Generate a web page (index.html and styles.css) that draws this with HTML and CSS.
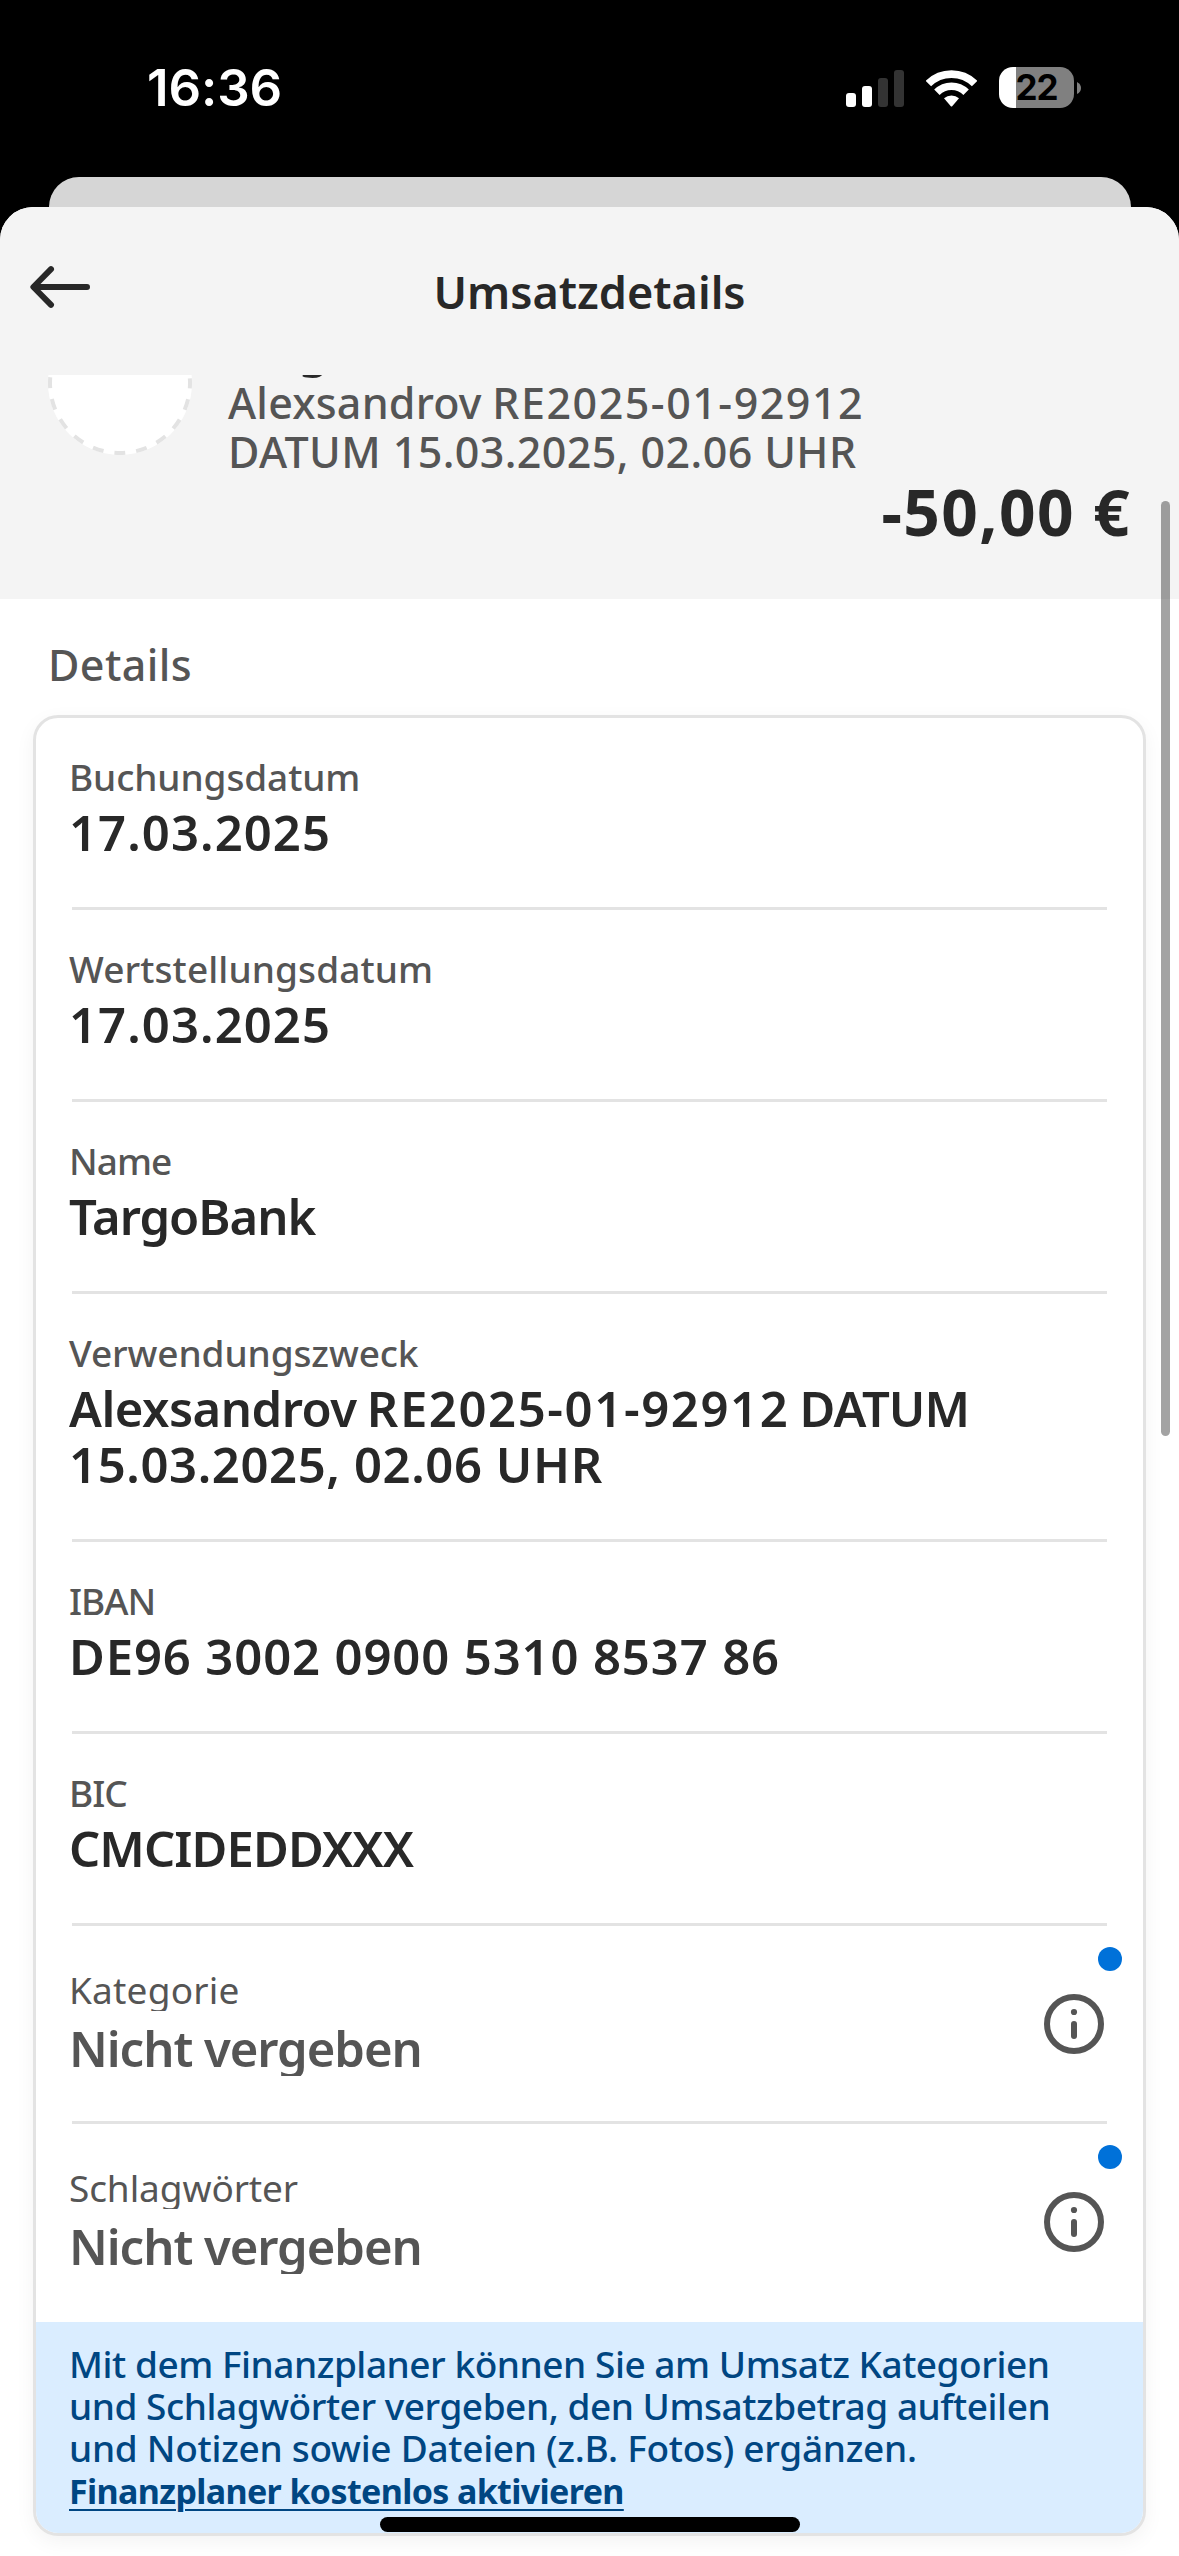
FILE: index.html
```html
<!DOCTYPE html>
<html lang="de">
<head>
  <meta charset="utf-8">
  <title>Umsatzdetails</title>
  <link rel="stylesheet" href="styles.css">
</head>
<body>
  <div class="screen">
    <header class="status">
      <div class="clock">16:36</div>
      <div class="status-icons">
        <svg class="signal" width="58" height="38" viewBox="0 0 58 38">
          <rect x="0" y="24" width="10" height="14" rx="3" fill="#fff"/>
          <rect x="16" y="17" width="10" height="21" rx="3" fill="#fff"/>
          <rect x="32" y="9" width="10" height="29" rx="3" fill="#333"/>
          <rect x="48" y="1" width="10" height="37" rx="3" fill="#333"/>
        </svg>
        <svg class="wifi" width="51" height="38" viewBox="0 0 51 38">
          <g fill="none" stroke="#fff" stroke-width="7.7">
            <path d="M2.4 14.6A33 33 0 0 1 48.6 14.6"/>
            <path d="M10.9 23.3A20.7 20.7 0 0 1 40.1 23.3"/>
          </g>
          <path d="M18 29.2A11.5 11.5 0 0 1 33 29.2L26.2 37.2Q25.5 38 24.8 37.2Z" fill="#fff"/>
        </svg>
        <div class="battery"><span class="battery-level">22</span></div>
        <svg class="battery-nub" width="4" height="12" viewBox="0 0 4 12"><path d="M0 0Q4 2 4 6Q4 10 0 12Z" fill="#808080"/></svg>
      </div>
    </header>

    <div class="sheet-behind"></div>

    <main class="sheet">
      <div class="appbar">
        <svg class="back" width="60" height="42" viewBox="0 0 60 42" fill="none" stroke="#282828" stroke-width="6" stroke-linecap="round" stroke-linejoin="round">
          <path d="M57 21H4M21 3.2L3.4 21L21 38.8"/>
        </svg>
        <h1 class="title">Umsatzdetails</h1>
      </div>

      <div class="scroll">
        <section class="summary">
          <div class="party">
            <svg class="avatar" width="144" height="144" viewBox="0 0 144 144">
              <circle cx="72" cy="72" r="72" fill="#fff"/>
              <circle cx="72" cy="72" r="70" fill="none" stroke="#e3e3e3" stroke-width="4" stroke-dasharray="11 10.991" stroke-dashoffset="5.5"/>
            </svg>
            <div>
              <div class="party-name">TargoBank</div>
              <div class="party-line"><span class="party-payee">Alexsandrov</span> RE2025-01-92912</div>
              <div class="party-line tight">DATUM 15.03.2025, 02.06 UHR</div>
            </div>
          </div>
          <div class="amount">-50,00 €</div>
        </section>

        <h2 class="section-title">Details</h2>

        <section class="card">
          <div class="row"><div class="label booking">Buchungsdatum</div><div class="value date">17.03.2025</div></div>
          <hr class="rule">
          <div class="row"><div class="label">Wertstellungsdatum</div><div class="value date">17.03.2025</div></div>
          <hr class="rule">
          <div class="row"><div class="label short">Name</div><div class="value name">TargoBank</div></div>
          <hr class="rule">
          <div class="row"><div class="label purpose">Verwendungszweck</div><div class="value reference"><span class="payee">Alexsandrov</span> <span class="invoice">RE2025-01-92912</span> <span class="marker">DATUM</span><br><span class="reference-date">15.03.2025, 02.06 UHR</span></div></div>
          <hr class="rule">
          <div class="row"><div class="label code">IBAN</div><div class="value iban">DE96 3002 0900 5310 8537 86</div></div>
          <hr class="rule">
          <div class="row"><div class="label code">BIC</div><div class="value bic">CMCIDEDDXXX</div></div>
          <hr class="rule">
          <div class="row planner">
            <div>
              <div class="label light">Kategorie</div>
              <div class="value unset">Nicht vergeben</div>
            </div>
            <svg class="info" width="60" height="60" viewBox="0 0 60 60"><circle cx="30" cy="30" r="27" fill="none" stroke="#555" stroke-width="6"/><circle cx="30" cy="18" r="3.1" fill="#555"/><rect x="27" y="27" width="6" height="18" rx="3" fill="#555"/></svg>
            <i class="dot"></i>
          </div>
          <hr class="rule">
          <div class="row planner last">
            <div>
              <div class="label light tags">Schlagwörter</div>
              <div class="value unset">Nicht vergeben</div>
            </div>
            <svg class="info" width="60" height="60" viewBox="0 0 60 60"><circle cx="30" cy="30" r="27" fill="none" stroke="#555" stroke-width="6"/><circle cx="30" cy="18" r="3.1" fill="#555"/><rect x="27" y="27" width="6" height="18" rx="3" fill="#555"/></svg>
            <i class="dot"></i>
          </div>
          <div class="promo">
            Mit dem Finanzplaner können Sie am Umsatz Kategorien<br>
            und Schlagwörter vergeben, den Umsatzbetrag aufteilen<br>
            <span class="promo-notes">und Notizen sowie Dateien (z.B. Fotos) ergänzen.</span><br>
            <a class="promo-link">Finanzplaner kostenlos aktivieren</a>
          </div>
        </section>
      </div>
    </main>

    <div class="scrollbar"></div>
    <div class="home-indicator"></div>
  </div>
</body>
</html>
```
FILE: styles.css
```css
* { box-sizing: border-box; }

body {
  margin: 0;
  background: #000;
  font-family: "Noto Sans", "Open Sans", sans-serif;
  color: #282828;
}

.screen {
  position: relative;
  display: flex;
  flex-direction: column;
  width: 1179px;
  height: 2556px;
  overflow: hidden;
  background: #000;
}

/* Status bar */
.status {
  display: flex;
  justify-content: space-between;
  align-items: flex-start;
  height: 177px;
  padding: 58px 98px 0 147px;
  font-family: Inter, "Liberation Sans", sans-serif;
}

.clock {
  color: #fff;
  font-size: 51px;
  font-weight: 600;
  line-height: 60px;
  letter-spacing: -0.1px;
}

.status-icons {
  display: flex;
  align-items: center;
  height: 41px;
  margin-top: 9px;
}

.wifi { margin-left: 22px; }

.battery {
  width: 75px;
  height: 41px;
  margin-left: 22px;
  border-radius: 14px;
  background: linear-gradient(90deg, #fff 17px, #808080 17px);
  text-align: center;
}

.battery-level {
  display: block;
  color: #000;
  font-size: 35px;
  font-weight: 700;
  line-height: 41px;
  letter-spacing: -1px;
}

.battery-nub { margin-left: 3px; }

/* Stacked sheets */
.sheet-behind {
  height: 30px;
  margin: 0 48.5px;
  border-radius: 30px 30px 0 0;
  background: #d6d6d6;
}

.sheet {
  flex: 1;
  display: flex;
  flex-direction: column;
  overflow: hidden;
  border-radius: 33px 33px 0 0;
  background: #fff;
}

.appbar {
  display: grid;
  grid-template-columns: 60px 1fr 60px;
  align-items: start;
  flex: none;
  height: 168px;
  padding: 0 30px;
  background: #f4f4f4;
}

.back { margin-top: 59px; }

.title {
  margin: 54px 0 0;
  font-size: 45px;
  font-weight: 600;
  line-height: 61px;
  letter-spacing: 0;
  text-align: center;
}

.scroll {
  flex: 1;
  overflow: hidden;
}

/* Transaction summary, scrolled partly under the app bar */
.summary {
  height: 288px;
  margin-top: -64px;
  padding: 0 48px;
  background: #f4f4f4;
}

.party {
  display: flex;
  gap: 36px;
  height: 166px;
}

.party-name {
  padding: 8px 0 3px;
  font-size: 49px;
  font-weight: 600;
  line-height: 56px;
  letter-spacing: -1px;
}

.party-line {
  color: #555;
  font-size: 43px;
  font-weight: 500;
  line-height: 49px;
  letter-spacing: 1.5px;
  word-spacing: -2px;
}

.party-payee { letter-spacing: 0.2px; }

.party-line.tight {
  letter-spacing: 0.4px;
  word-spacing: 0;
}

.amount {
  font-size: 64px;
  font-weight: 700;
  line-height: 70px;
  letter-spacing: 1.4px;
  text-align: right;
}

.section-title {
  margin: 0;
  padding: 41px 48px 25px;
  color: #555;
  font-size: 43px;
  font-weight: 500;
  line-height: 50px;
  letter-spacing: 0.4px;
}

/* Details card */
.card {
  margin: 0 33px;
  overflow: hidden;
  border: 3px solid #e3e3e3;
  border-radius: 25px;
  background: #fff;
  box-shadow: 0 6px 20px rgba(0, 0, 0, 0.05);
}

.row { padding: 36px 33px 47px; }

.rule {
  height: 3px;
  margin: 0 36px;
  border: 0;
  background: #e3e3e3;
}

.label {
  color: #555;
  font-size: 37px;
  font-weight: 500;
  line-height: 45px;
  letter-spacing: 0.1px;
}

.label.booking { letter-spacing: -0.1px; }
.label.short { letter-spacing: -1px; }
.label.purpose { letter-spacing: -0.1px; }
.label.code { letter-spacing: -1px; }

.value {
  margin-top: 5px;
  font-size: 49px;
  font-weight: 600;
  line-height: 56px;
}

.value.date { letter-spacing: 1.08px; }
.value.name { letter-spacing: -1px; }
.value.reference { word-spacing: -2.5px; }
.payee { letter-spacing: -0.5px; }
.invoice { letter-spacing: 1.6px; }
.marker { letter-spacing: -1px; }

.reference-date {
  letter-spacing: 0.6px;
  word-spacing: 0;
}

.value.iban { letter-spacing: 0.87px; }
.value.bic { letter-spacing: -0.9px; }

.row.planner {
  position: relative;
  display: flex;
  justify-content: space-between;
  align-items: flex-start;
  height: 195px;
  padding: 42px 39px 0 33px;
}

.row.planner.last { height: 198px; }

.label.light {
  height: 43px;
  overflow: hidden;
  font-weight: 400;
  line-height: 44px;
  letter-spacing: 0.2px;
}

.label.light.tags { letter-spacing: -0.1px; }

.value.unset {
  height: 56px;
  margin-top: 9px;
  overflow: hidden;
  color: #555;
  letter-spacing: -1.05px;
}

.info { margin-top: 26px; }

.dot {
  position: absolute;
  top: 21px;
  right: 21px;
  width: 24px;
  height: 24px;
  border-radius: 50%;
  background: #0071d9;
}

.promo {
  height: 211px;
  padding: 21px 33px 0;
  background: #daedff;
  color: #004682;
  font-size: 37px;
  font-weight: 500;
  line-height: 42px;
  letter-spacing: -0.46px;
  white-space: nowrap;
}

.promo-notes { letter-spacing: -0.28px; }

.promo-link {
  font-size: 34px;
  font-weight: 700;
  letter-spacing: -0.63px;
  text-decoration: underline;
  text-decoration-thickness: 2px;
  text-underline-offset: 5px;
}

/* System overlays */
.scrollbar {
  position: absolute;
  top: 501px;
  right: 9px;
  width: 9px;
  height: 935px;
  border-radius: 5px;
  background: rgba(0, 0, 0, 0.36);
}

.home-indicator {
  position: absolute;
  bottom: 24px;
  left: 380px;
  width: 420px;
  height: 15px;
  border-radius: 8px;
  background: #000;
}
```
